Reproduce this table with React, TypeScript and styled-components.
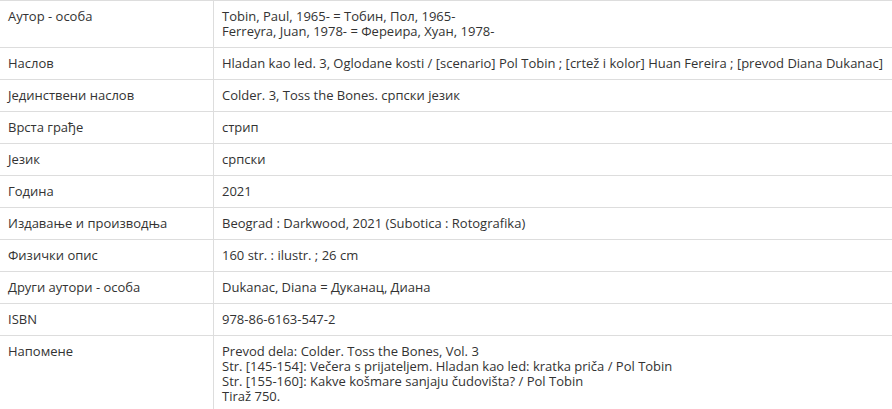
import styled, { createGlobalStyle } from 'styled-components'

const GlobalStyle = createGlobalStyle`
    body {
        margin: 0;
        background: #fff;
        font-family: "Open Sans", "Liberation Sans", sans-serif;
        font-size: 13px;
        color: #333;
    }
`

const Table = styled.table`
    width: 100%;
    border-collapse: collapse;
    border-top: 1px solid #ddd;
`

const Row = styled.tr`
    border-bottom: 1px solid #ddd;
`

const Label = styled.td`
    width: 197px;
    padding: 8px 8px 8px 8px;
    line-height: 15px;
    vertical-align: top;
    border-right: 1px solid #ddd;
`

const Value = styled.td`
    padding: 8px;
    line-height: 15px;
    vertical-align: top;
`

const records: [string, string[]][] = [
    [ 'Аутор - особа', [
        'Tobin, Paul, 1965- = Тобин, Пол, 1965-',
        'Ferreyra, Juan, 1978- = Фереира, Хуан, 1978-',
    ] ],
    [ 'Наслов', [ 'Hladan kao led. 3, Oglodane kosti / [scenario] Pol Tobin ; [crtež i kolor] Huan Fereira ; [prevod Diana Dukanac]' ] ],
    [ 'Јединствени наслов', [ 'Colder. 3, Toss the Bones. српски језик' ] ],
    [ 'Врста грађе', [ 'стрип' ] ],
    [ 'Језик', [ 'српски' ] ],
    [ 'Година', [ '2021' ] ],
    [ 'Издавање и производња', [ 'Beograd : Darkwood, 2021 (Subotica : Rotografika)' ] ],
    [ 'Физички опис', [ '160 str. : ilustr. ; 26 cm' ] ],
    [ 'Други аутори - особа', [ 'Dukanac, Diana = Дуканац, Диана' ] ],
    [ 'ISBN', [ '978-86-6163-547-2' ] ],
    [ 'Напомене', [
        'Prevod dela: Colder. Toss the Bones, Vol. 3',
        'Str. [145-154]: Večera s prijateljem. Hladan kao led: kratka priča / Pol Tobin',
        'Str. [155-160]: Kakve košmare sanjaju čudovišta? / Pol Tobin',
        'Tiraž 750.',
    ] ],
]

export default function App() {
    return (
        <>
            <GlobalStyle />
            <Table>
                <tbody>
                    { records.map(([ label, lines ]) =>
                        <Row key={ label }>
                            <Label>{ label }</Label>
                            <Value>
                                { lines.map((line, i) => <div key={ i }>{ line }</div>) }
                            </Value>
                        </Row>
                    ) }
                </tbody>
            </Table>
        </>
    )
}
